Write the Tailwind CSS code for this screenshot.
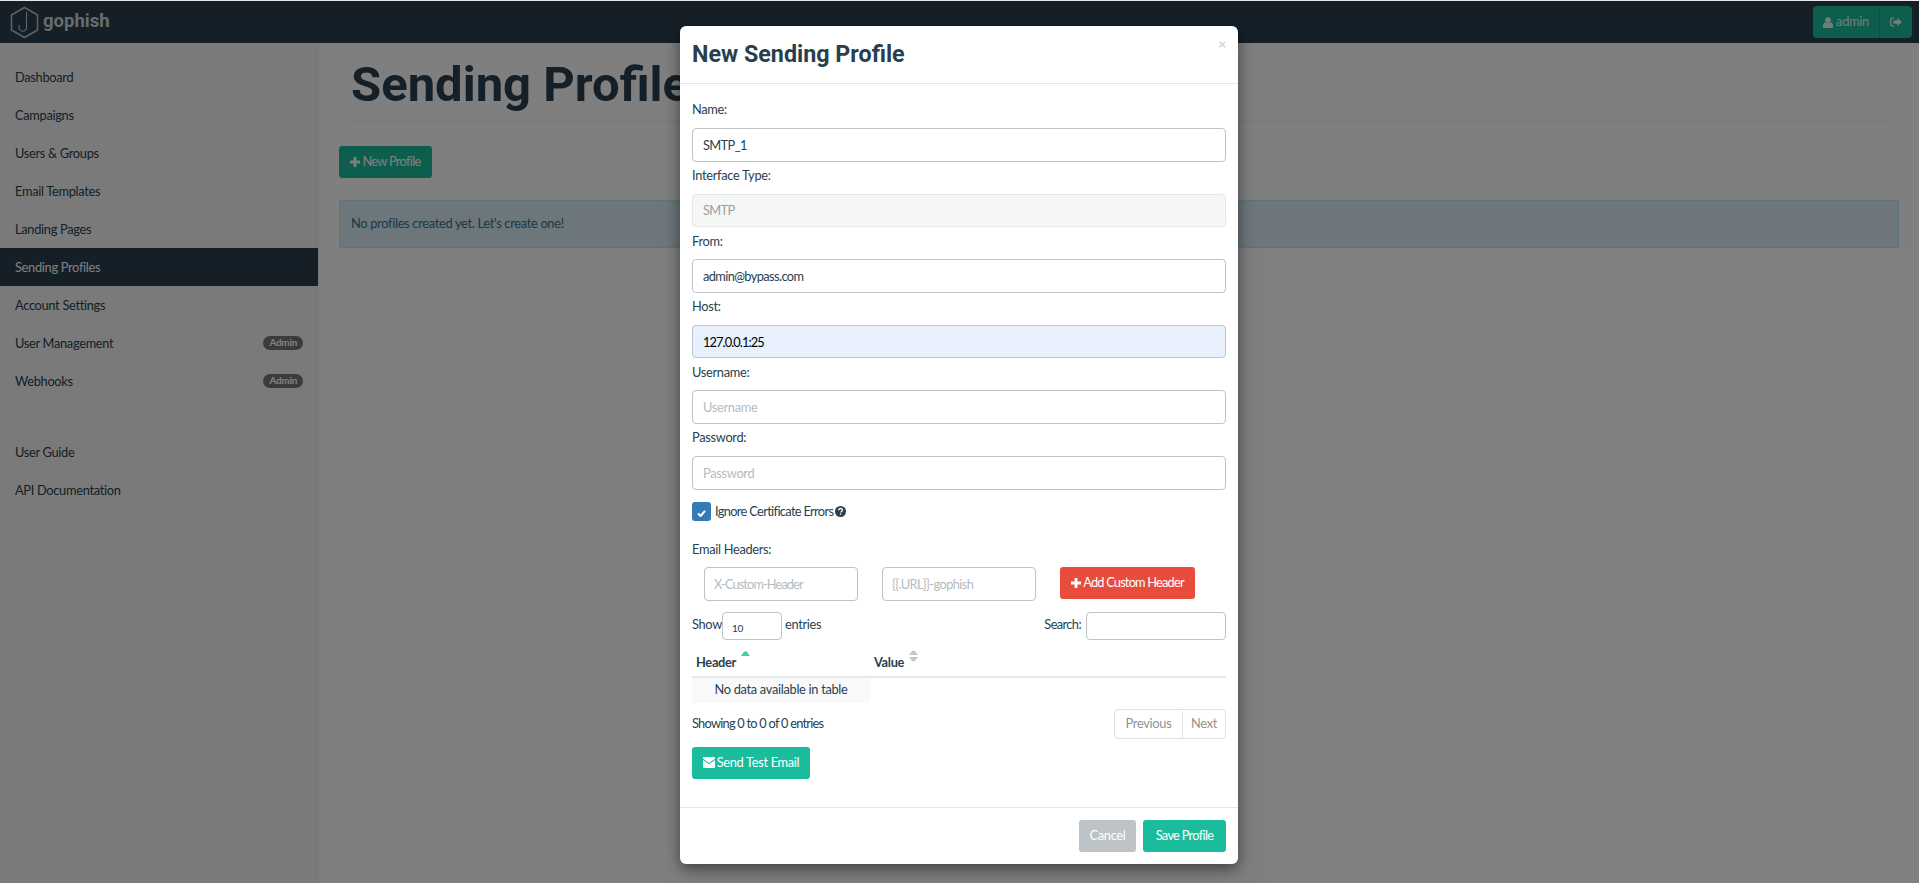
<!DOCTYPE html>
<html lang="en">
<head>
  <meta charset="UTF-8">
  <title>Sending Profiles - Gophish</title>
  <script src="https://cdn.jsdelivr.net/npm/@tailwindcss/browser@4"></script>
</head>
<body class="relative h-[883px] overflow-hidden bg-white font-['Lato','Liberation_Sans',sans-serif] text-[12.8px] tracking-[-0.3px] text-[#283f50]">
  <div class="h-px bg-[#e8e8e8]"></div>

  <!-- navbar -->
  <nav class="flex h-[42px] items-center justify-between bg-[#283f50] pl-[10px] pr-[7px]">
    <div class="flex items-center gap-[4px]">
      <svg width="29" height="33" viewBox="0 0 29 33" fill="none" stroke="#bcc2c6" stroke-width="1.6">
        <path d="M14.5 1.5 27.5 9v15l-13 7.5L1.5 24V9z"/>
        <path d="M16.5 6v15.5a3.7 3.7 0 0 1-7.4 0V19" stroke-width="1.2"/>
      </svg>
      <span class="font-['Roboto',sans-serif] text-[18.5px] font-bold tracking-normal text-[#d3d7da]">gophish</span>
    </div>
    <div class="flex h-[32px] items-center rounded-[4px] bg-[#1abc9c] text-[#e8f8f5]">
      <div class="flex h-full w-[67px] items-center justify-center gap-[3px] border-r border-[#16a085]">
        <svg width="10" height="11" viewBox="0 0 10 11" fill="currentColor"><circle cx="5" cy="3" r="2.8"/><path d="M0 11V8.4C0 6.6 1.2 5.4 2.6 5.3c1.4 1 3.4 1 4.8 0C8.800 5.400 10 6.600 10 8.400V11z"/></svg>
        <span>admin</span>
      </div>
      <div class="flex h-full w-[32px] items-center justify-center">
        <svg width="12" height="10" viewBox="0 0 13 11" fill="currentColor"><path d="M4.500 0.500H2.200C1 0.500 0 1.500 0 2.700v5.600c0 1.200 1 2.200 2.200 2.200h2.300V9H2.300c-.5 0-.9-.4-.9-.9V2.900c0-.5.4-.9.9-.9h2.200z"/><path d="M8 0.800 13 5.500 8 10.200V7.500H3.600V3.500H8z"/></svg>
      </div>
    </div>
  </nav>

  <div class="flex h-[840px]">
    <!-- sidebar -->
    <aside class="w-[319px] shrink-0 border-r border-[#eeeeee] bg-[#f5f5f5] pt-[15px] text-[#283f50]">
      <ul class="w-[318px]">
        <li class="flex h-[38px] items-center px-[15px] pt-[2px]">Dashboard</li>
        <li class="flex h-[38px] items-center px-[15px] pt-[2px]">Campaigns</li>
        <li class="flex h-[38px] items-center px-[15px] pt-[2px]">Users &amp; Groups</li>
        <li class="flex h-[38px] items-center px-[15px] pt-[2px]">Email Templates</li>
        <li class="flex h-[38px] items-center px-[15px] pt-[2px]">Landing Pages</li>
        <li class="flex h-[38px] items-center bg-[#283f50] px-[15px] pt-[2px] text-white">Sending Profiles</li>
        <li class="flex h-[38px] items-center px-[15px] pt-[2px]">Account Settings</li>
        <li class="flex h-[38px] items-center justify-between px-[15px] pt-[2px]">User Management <span class="mb-[3px] rounded-[8px] bg-[#777777] px-[6px] pb-[2px] text-[10px] leading-[12px] font-bold text-white">Admin</span></li>
        <li class="flex h-[38px] items-center justify-between px-[15px] pt-[2px]">Webhooks <span class="mb-[3px] rounded-[8px] bg-[#777777] px-[6px] pb-[2px] text-[10px] leading-[12px] font-bold text-white">Admin</span></li>
      </ul>
      <div class="mt-[16px] h-px bg-[#eeeeee]"></div>
      <ul class="mt-[17px] w-[318px]">
        <li class="flex h-[38px] items-center px-[15px]">User Guide</li>
        <li class="flex h-[38px] items-center px-[15px]">API Documentation</li>
      </ul>
    </aside>

    <!-- main -->
    <main class="flex-1 pl-[20px] pr-[20px]">
      <div class="ml-[12px] mr-[13px] h-[79px] border-b border-[#eeeeee] pt-[3px]">
        <h1 class="font-['Roboto',sans-serif] text-[49px] leading-[78px] font-bold tracking-normal text-[#283f50]">Sending Profiles</h1>
      </div>
      <button class="mt-[24px] flex h-[32px] w-[93px] items-center justify-center gap-[2px] rounded-[3px] bg-[#1abc9c] tracking-[-0.7px] text-white">
        <svg width="10" height="10" viewBox="0 0 10 10" fill="currentColor"><path d="M3.600 0h2.800v3.600H10v2.800H6.400V10H3.600V6.400H0V3.600h3.600z"/></svg>
        New Profile
      </button>
      <div class="mt-[22px] flex h-[48px] items-center rounded-[3px] border border-[#bce8f1] bg-[#d9edf7] px-[11px] text-[#31708f]">No profiles created yet. Let's create one!</div>
    </main>
  </div>

  <!-- backdrop -->
  <div class="absolute inset-x-0 top-px bottom-0 bg-black/50"></div>

  <!-- modal -->
  <div class="absolute left-[680px] top-[26px] w-[558px] rounded-[6px] bg-white shadow-[0_5px_15px_rgba(0,0,0,0.5)]">
    <div class="relative flex h-[58px] items-center border-b border-[#e5e5e5] px-[12px]">
      <h2 class="font-['Roboto',sans-serif] text-[23.3px] font-bold tracking-normal text-[#283f50]">New Sending Profile</h2>
      <span class="absolute right-[12px] top-[7px] text-[14px] font-bold text-[#cfd3d6]">×</span>
    </div>

    <div class="h-[723px] px-[12px] pt-[12px]">
      <label class="flex h-[32px] items-center pb-[4px]">Name:</label>
      <input class="block h-[33.6px] w-full rounded-[4px] border border-[#bdc3c7] px-[10px] tracking-[-0.6px] outline-none" value="SMTP_1">
      <label class="flex h-[32px] items-center pb-[4px]">Interface Type:</label>
      <input class="block h-[33.6px] w-full rounded-[4px] border border-[#e6e9ea] bg-[#f5f7f7] px-[10px] tracking-[-0.6px] text-[#9aa0a3] outline-none" value="SMTP" disabled>
      <label class="flex h-[32px] items-center pb-[4px]">From:</label>
      <input class="block h-[33.6px] w-full rounded-[4px] border border-[#bdc3c7] px-[10px] tracking-[-0.6px] outline-none" value="admin@bypass.com">
      <label class="flex h-[32px] items-center pb-[4px]">Host:</label>
      <input class="block h-[33.6px] w-full rounded-[4px] border border-[#bdc3c7] bg-[#e8f0fe] px-[10px] tracking-[-0.9px] text-black outline-none" value="127.0.0.1:25">
      <label class="flex h-[32px] items-center pb-[4px]">Username:</label>
      <input class="block h-[33.6px] w-full rounded-[4px] border border-[#bdc3c7] px-[10px] outline-none placeholder:text-[#b4bcc0]" placeholder="Username">
      <label class="flex h-[32px] items-center pb-[4px]">Password:</label>
      <input class="block h-[33.6px] w-full rounded-[4px] border border-[#bdc3c7] px-[10px] outline-none placeholder:text-[#b4bcc0]" placeholder="Password">

      <div class="mt-[12px] flex h-[19px] items-center">
        <span class="flex size-[19px] items-center justify-center rounded-[3px] bg-[#337ab7]">
          <svg width="9" height="7" viewBox="0 0 10 8" fill="none" stroke="white" stroke-width="2.400" class="mt-[4px]"><path d="M1 4l3 2.800L9 1"/></svg>
        </span>
        <span class="ml-[4px] pt-px tracking-[-0.65px]">Ignore Certificate Errors</span>
        <svg class="ml-[2px]" width="11" height="11" viewBox="0 0 11 11"><circle cx="5.500" cy="5.500" r="5.500" fill="#283f50"/><path d="M3.600 4.300c0-1.100.9-1.800 1.900-1.800 1.100 0 1.900.7 1.900 1.600 0 1.300-1.600 1.300-1.600 2.400" fill="none" stroke="white" stroke-width="1.300"/><rect x="4.900" y="7.400" width="1.300" height="1.300" fill="white"/></svg>
      </div>

      <label class="mt-[19px] flex h-[20px] items-center">Email Headers:</label>
      <div class="mt-[7px] flex items-start pl-[12px]">
        <input class="h-[34px] w-[154px] rounded-[4px] border border-[#bdc3c7] px-[9px] tracking-[-0.9px] outline-none placeholder:text-[#b4bcc0]" placeholder="X-Custom-Header">
        <input class="ml-[24px] h-[34px] w-[154px] rounded-[4px] border border-[#bdc3c7] px-[9px] tracking-[-0.6px] outline-none placeholder:text-[#b4bcc0]" placeholder="{{.URL}}-gophish">
        <button class="ml-[24px] flex h-[32px] w-[135px] items-center justify-center gap-[2px] rounded-[3px] bg-[#e74c3c] tracking-[-0.8px] text-white">
          <svg width="10" height="10" viewBox="0 0 10 10" fill="currentColor"><path d="M3.600 0h2.800v3.600H10v2.800H6.400V10H3.600V6.400H0V3.600h3.600z"/></svg>
          Add Custom Header
        </button>
      </div>

      <div class="mt-[11px] flex h-[28px] items-center justify-between">
        <div class="flex items-center">
          <span class="w-[30px] pb-[2px]">Show</span>
          <span class="flex h-[28px] w-[60px] items-end rounded-[4px] border border-[#bdc3c7] pb-[5px] pl-[9px] text-[10px] leading-[12px]">10</span>
          <span class="ml-[3px] pb-[2px]">entries</span>
        </div>
        <div class="flex items-center">
          <span class="pb-[2px] tracking-[-0.6px]">Search:</span>
          <input class="ml-[5px] h-[28px] w-[140px] rounded-[4px] border border-[#bdc3c7] outline-none">
        </div>
      </div>

      <table class="w-full border-collapse">
        <thead>
          <tr class="h-[37px] border-b-2 border-[#e5e8e8] text-left">
            <th class="w-[178px] pl-[4px] pt-[11px] font-bold">
              <span class="relative inline-block">Header
                <svg class="absolute left-[45px] top-[-2px]" width="9" height="5" viewBox="0 0 9 5" fill="#48c9b0"><path d="M0 5 3 .8C3.800 0 5.200 0 6 .8L9 5z"/></svg>
              </span>
            </th>
            <th class="pl-[4px] pt-[11px] font-bold">
              <span class="relative inline-block">Value
                <svg class="absolute left-[35px] top-[-3px]" width="9" height="12" viewBox="0 0 9 12" fill="#c4c9cc"><path d="M0 5 3 1C3.800 .2 5.200 .2 6 1L9 5zM0 7h9L6 11C5.200 11.800 3.800 11.800 3 11z"/></svg>
              </span>
            </th>
          </tr>
        </thead>
        <tbody>
          <tr class="h-[26px]"><td class="bg-[#f9f9f9] text-center">No data available in table</td><td></td></tr>
        </tbody>
      </table>

      <div class="mt-[6px] flex h-[30px] items-center justify-between">
        <span class="tracking-[-0.75px]">Showing 0 to 0 of 0 entries</span>
        <div class="flex h-[30px] rounded-[4px] border border-[#dfe3e4] pt-px text-[#8a9296]">
          <span class="flex w-[67px] items-center justify-center">Previous</span>
          <span class="flex w-[43px] items-center justify-center border-l border-[#dfe3e4] text-[#9b8f83]">Next</span>
        </div>
      </div>

      <button class="mt-[8px] flex h-[32px] w-[118px] items-center justify-center gap-[2px] rounded-[3px] bg-[#1abc9c] text-white">
        <svg width="12" height="11" viewBox="0 0 12 11" fill="currentColor"><path d="M1 0h10c.6 0 1 .4 1 1v.8L6 6 0 1.800V1c0-.6.4-1 1-1z"/><path d="M0 3l6 4.200L12 3v7c0 .6-.4 1-1 1H1c-.6 0-1-.4-1-1z"/></svg>
        Send Test Email
      </button>
    </div>

    <div class="flex h-[57px] justify-end gap-[7px] border-t border-[#e5e5e5] px-[12px] pt-[12px]">
      <button class="h-[32px] w-[57px] rounded-[3px] bg-[#bdc3c7] text-white">Cancel</button>
      <button class="h-[32px] w-[83px] rounded-[3px] bg-[#1abc9c] tracking-[-0.7px] text-white">Save Profile</button>
    </div>
  </div>
</body>
</html>
